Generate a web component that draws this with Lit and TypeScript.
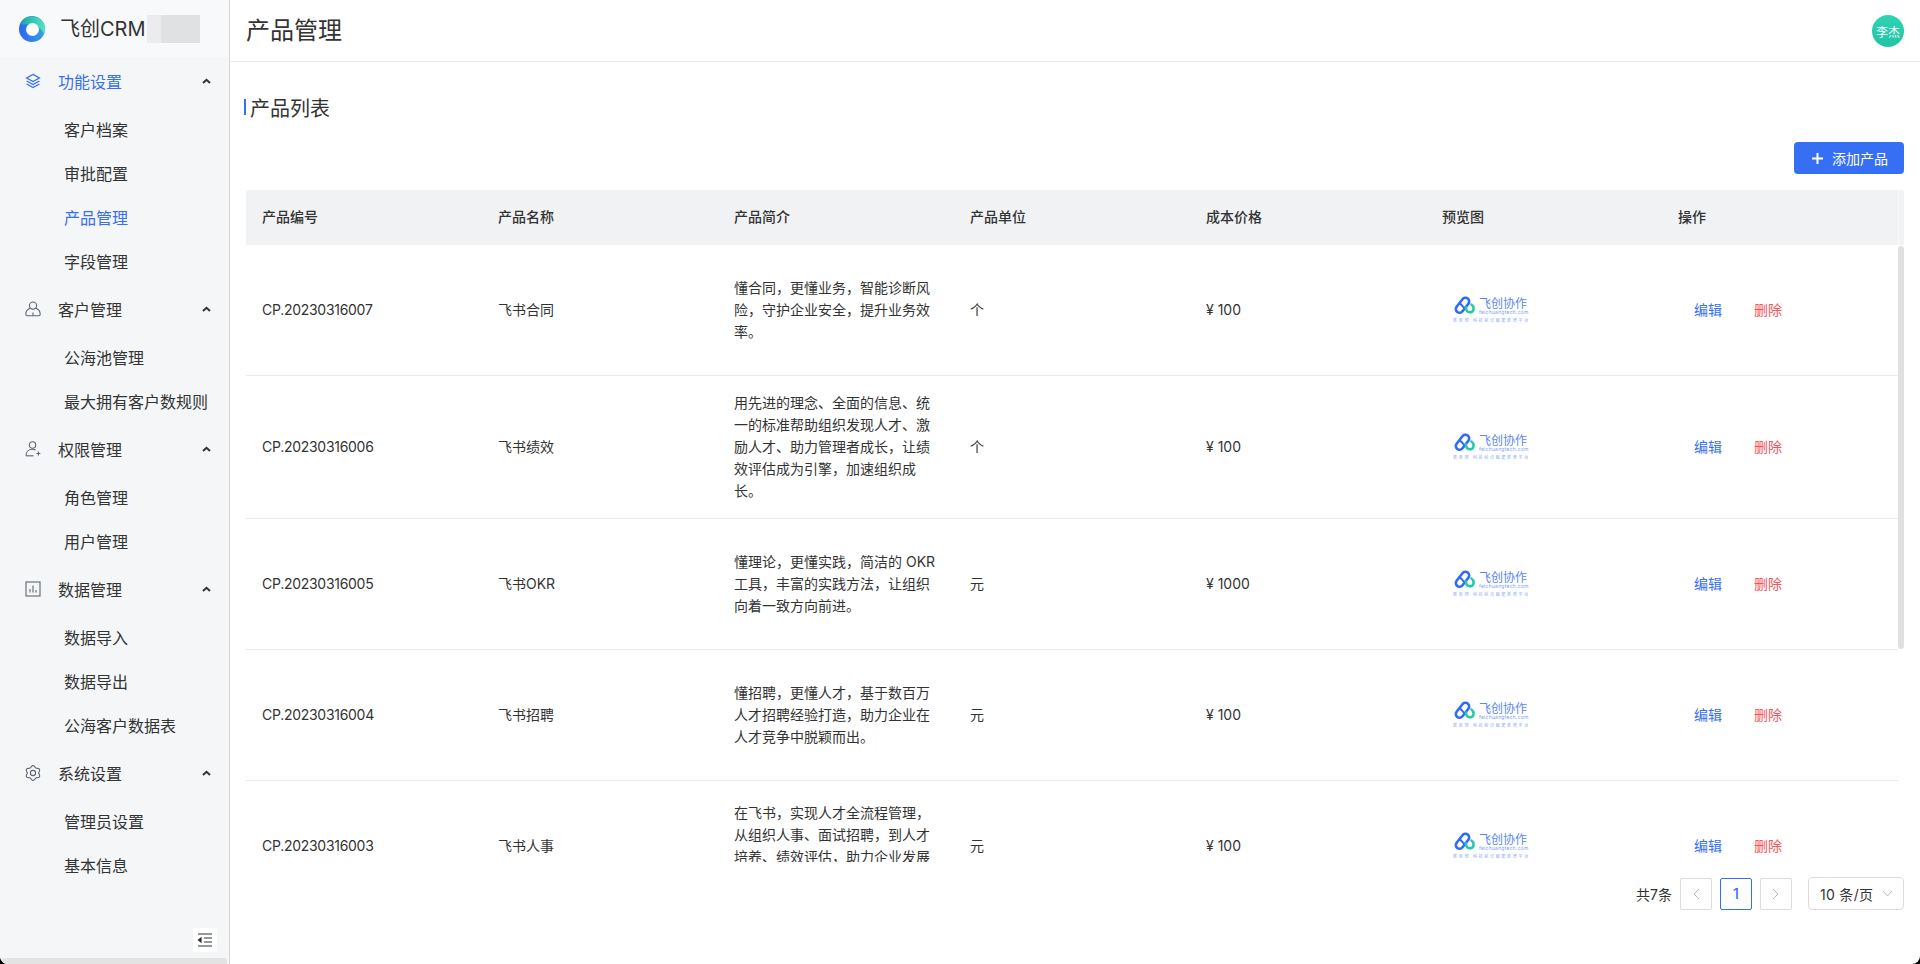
import { LitElement, html, css, svg } from "lit";
import { customElement } from "lit/decorators.js";

function gearPath() {
  const pts: string[] = [];
  const n = 72;
  for (let k = 0; k < n; k++) {
    const a = (k / n) * Math.PI * 2 + Math.PI / 6;
    const r = 6.6 + 0.9 * Math.cos(6 * a - Math.PI);
    pts.push(`${(8 + r * Math.cos(a)).toFixed(2)} ${(8 + r * Math.sin(a)).toFixed(2)}`);
  }
  return "M" + pts.join("L") + "Z";
}

const icons: Record<string, any> = {
  layers: svg`<path d="M8 1.400 14.400 5 8 8.600 1.600 5Z"/><path d="M1.600 8 8 11.600 14.400 8"/><path d="M1.600 11 8 14.600 14.400 11"/>`,
  user: svg`<circle cx="8" cy="4.600" r="3.600"/><path d="M5.200 7.300C2.500 8.300.8 10.600.8 13.300c0 .9.500 1.400 1.400 1.400h11.600c.9 0 1.400-.5 1.400-1.400 0-2.700-1.700-5-4.400-6"/><path d="M8 11.500v3"/>`,
  userAdd: svg`<circle cx="7.500" cy="4" r="3.200"/><path d="M1 14.800c0-3.800 2.600-6.500 6.500-6.500 1.100 0 2.100.2 3 .7"/><path d="M1 14.800h7.500"/><path d="M11.400 12.500h4M13.400 10.500v4"/>`,
  chart: svg`<rect x="1" y="1" width="14" height="14"/><path d="M5 11.500V8M8 11.500V4.500M11 11.500V9"/>`,
  gear: svg`<path d=${gearPath()}/><circle cx="8" cy="8" r="2.600"/>`,
};

const menu = [
  { t: "功能设置", i: "layers", active: true, c: ["客户档案", "审批配置", "产品管理", "字段管理"] },
  { t: "客户管理", i: "user", c: ["公海池管理", "最大拥有客户数规则"] },
  { t: "权限管理", i: "userAdd", c: ["角色管理", "用户管理"] },
  { t: "数据管理", i: "chart", c: ["数据导入", "数据导出", "公海客户数据表"] },
  { t: "系统设置", i: "gear", c: ["管理员设置", "基本信息"] },
];

const C = "\uFF0C";
const rows = [
  ["CP.20230316007", "飞书合同", `懂合同${C}更懂业务${C}智能诊断风险${C}守护企业安全${C}提升业务效率。`, "个", "¥ 100"],
  ["CP.20230316006", "飞书绩效", `用先进的理念、全面的信息、统一的标准帮助组织发现人才、激励人才、助力管理者成长${C}让绩效评估成为引擎${C}加速组织成长。`, "个", "¥ 100"],
  ["CP.20230316005", "飞书OKR", `懂理论${C}更懂实践${C}简洁的 OKR 工具${C}丰富的实践方法${C}让组织向着一致方向前进。`, "元", "¥ 1000"],
  ["CP.20230316004", "飞书招聘", `懂招聘${C}更懂人才${C}基于数百万人才招聘经验打造${C}助力企业在人才竞争中脱颖而出。`, "元", "¥ 100"],
  ["CP.20230316003", "飞书人事", `在飞书${C}实现人才全流程管理${C}从组织人事、面试招聘${C}到人才培养、绩效评估${C}助力企业发展与组织成长。`, "元", "¥ 100"],
];

const heads = ["产品编号", "产品名称", "产品简介", "产品单位", "成本价格", "预览图", "操作"];

@customElement("app-root")
export class AppRoot extends LitElement {
  static styles = css`
    :host { display: block; background: #000; font-family: Inter, "Noto Sans CJK SC", sans-serif; color: #333; }
    * { box-sizing: border-box; }
    .window { height: 964px; display: flex; background: #fff; border-radius: 0 0 8px 8px; overflow: hidden; }
    .side { width: 230px; flex: none; background: #f5f6f8; border-right: 1px solid #d6d6d6; display: flex; flex-direction: column; position: relative; }
    .brand { height: 57px; flex: none; background: #f8f9fa; display: flex; align-items: center; padding-left: 19px; font-size: 20px; color: #333; }
    .brand svg { width: 26px; height: 26px; margin-right: 15px; }
    .brand span { padding-bottom: 2px; }
    .mask { width: 53px; height: 28px; margin-left: 1px; background: linear-gradient(90deg, #ececee 0 14px, #e0e1e3 14px); }
    .group { margin-bottom: 2px; }
    .title { height: 48px; display: flex; align-items: center; font-size: 16px; color: #333; padding-left: 25px; }
    .title.on { color: #366ef4; }
    .ico { width: 16px; height: 16px; margin-right: 17px; fill: none; stroke: #5d6470; stroke-width: 1.1; }
    .title.on .ico { stroke: #366ef4; stroke-width: 1.3; }
    .arrow { width: 9px; height: 6px; margin-left: auto; margin-right: 18px; fill: none; stroke: #333; stroke-width: 2; }
    .subs { padding-top: 2px; }
    .sub { height: 44px; display: flex; align-items: center; padding-left: 64px; font-size: 16px; color: #333; white-space: nowrap; }
    .sub.on { color: #366ef4; }
    .collapse { position: absolute; left: 193px; top: 928px; width: 24px; height: 24px; background: #fff; border-radius: 2px; display: flex; align-items: center; justify-content: center; }
    .collapse svg { width: 16px; height: 14px; fill: none; stroke: #333; stroke-width: 1.2; }
    .hbar { position: absolute; left: 2px; bottom: 0; width: 225px; height: 6px; border-radius: 3px 3px 0 0; background: #e3e3e3; }
    .main { flex: 1; min-width: 0; display: flex; flex-direction: column; }
    .top { height: 62px; flex: none; border-bottom: 1px solid #e7e7e7; display: flex; align-items: center; justify-content: space-between; padding: 0 16px 4px; font-size: 24px; color: #333; }
    .avatar { width: 32px; height: 32px; border-radius: 50%; background: linear-gradient(#2dd4b4, #22c3a6); color: #fff; font-size: 12px; display: flex; align-items: center; justify-content: center; margin-bottom: -5px; }
    .content { flex: 1; padding: 0 16px; min-height: 0; display: flex; flex-direction: column; }
    .section { height: 46px; margin-top: 22px; display: flex; align-items: center; font-size: 20px; color: #333; margin-left: -2px; }
    .section i { width: 2px; height: 16px; background: #366ef4; margin-right: 4px; }
    .bar { display: flex; justify-content: flex-end; margin-top: 12px; height: 32px; margin-bottom: 16px; }
    .btn { width: 110px; height: 32px; background: #366ef4; border-radius: 4px; color: #fff; font-size: 14px; display: flex; align-items: center; padding-left: 18px; gap: 9px; }
    .btn svg { width: 11px; height: 11px; stroke: #fff; stroke-width: 2; fill: none; }
    .thead { height: 55px; flex: none; display: grid; grid-template-columns: repeat(7, 236px) 6px; background: #f1f2f4; border-radius: 3px 3px 0 0; align-items: center; font-size: 14px; font-weight: 500; color: #333; }
    .thead span { padding: 0 0 4px 16px; }
    .gutter { height: 100%; border-left: 1px solid #f8f8f9; }
    .tbody { height: 617px; flex: none; overflow: hidden; position: relative; }
    .thumbbar { position: absolute; right: 0; top: 1px; width: 6px; height: 403px; border-radius: 3px; background: #e0e0e0; }
    .row { display: grid; grid-template-columns: repeat(7, 236px); width: 1652px; border-bottom: 1px solid #ebebeb; align-items: center; font-size: 14px; line-height: 22px; color: #333; }
    .cell { padding: 16px; }
    .code { letter-spacing: -.28px; }
    .cell.thumb { height: 130px; padding: 0 0 0 27px; display: flex; align-items: center; }
    .ops { display: flex; gap: 32px; padding-left: 32px; }
    .edit { color: #366ef4; } .del { color: #f6535a; }
    .logo { width: 78px; height: 28px; position: relative; color: #5a86f6; }
    .logo svg { position: absolute; left: 0; top: 0; width: 22px; height: 20px; fill: none; stroke-width: 2.6; }
    .logo b { position: absolute; left: 26px; top: 1px; font-size: 12px; line-height: 14px; font-weight: 400; white-space: nowrap; }
    .logo em { position: absolute; left: 26px; top: 13px; font-size: 5px; line-height: 6px; letter-spacing: .25px; font-style: normal; white-space: nowrap; color: #7d9ff7; }
    .logo u { position: absolute; left: 0; top: 22px; font-size: 4px; line-height: 5px; text-decoration: none; white-space: nowrap; letter-spacing: 1.7px; color: #8aa8f8; }
    .pager { display: flex; justify-content: flex-end; align-items: center; gap: 8px; margin-top: 15px; font-size: 14px; color: #333; }
    .pg { width: 32px; height: 32px; border: 1px solid #dcdcdc; border-radius: 2px; display: flex; align-items: center; justify-content: center; color: #366ef4; }
    .pg svg { width: 8px; height: 12px; fill: none; stroke: #bbb; stroke-width: 1; }
    .pg.cur { border-color: #366ef4; font-weight: 500; }
    .sel { width: 96px; height: 33px; margin-left: 8px; border: 1px solid #dcdcdc; border-radius: 4px; display: flex; align-items: center; justify-content: space-between; padding: 0 10px 0 11px; letter-spacing: .3px; }
    .sel svg { width: 11px; height: 7px; fill: none; stroke: #bbb; stroke-width: 1; }
  `;

  private logo() {
    return html`<div class="logo">
      <svg viewBox="0 0 22 20">
        <rect x="1" y="5.500" width="17" height="7.500" rx="3.750" transform="rotate(-52 9.500 9.250)" stroke="#2f6bf5" />
        <path d="M6 7c2 1 4 3 6 6" stroke="#2f6bf5" stroke-width="2" />
        <path d="M13 11.500c0 6 7.600 6.500 7.600 1 0-2-1.200-3.400-2.200-4" stroke="#27c9ab" stroke-linecap="round" />
      </svg>
      <b>飞创协作</b><em>feichuangtech.com</em><u>新思想 科技前沿赋能新增平台</u>
    </div>`;
  }

  render() {
    return html`<div class="window">
      <aside class="side">
        <div class="brand">
          <svg viewBox="0 0 26 26">
            <defs>
              <linearGradient id="lb" x1="0" y1="0" x2="1" y2="0"><stop offset="0" stop-color="#2c66f2"/><stop offset="1" stop-color="#35a0ea"/></linearGradient>
              <linearGradient id="lt" x1="0" y1="0" x2="1" y2="0"><stop offset="0" stop-color="#16a89a"/><stop offset="1" stop-color="#4fe6c4"/></linearGradient>
            </defs>
            <circle cx="13" cy="13" r="13" fill="url(#lb)"/>
            <path d="M1.200 8A13 13 0 0 1 26 13c0 2-.4 3.300-1.200 4.800C22 12 17 8 12 8c-4 0-7.500 1-10.800 0Z" fill="url(#lt)"/>
            <circle cx="13.500" cy="13.500" r="6.500" fill="#fff"/>
          </svg>
          <span>飞创CRM</span><div class="mask"></div>
        </div>
        ${menu.map(
          (g) => html`<div class="group">
            <div class="title ${g.active ? "on" : ""}">
              <svg class="ico" viewBox="0 0 16 16">${icons[g.i]}</svg>
              ${g.t}
              <svg class="arrow" viewBox="0 0 9 6"><path d="M1 5l3.500-3.200L8 5"/></svg>
            </div>
            <div class="subs">
              ${g.c.map((s) => html`<div class="sub ${s === "产品管理" ? "on" : ""}">${s}</div>`)}
            </div>
          </div>`
        )}
        <div class="collapse"><svg viewBox="0 0 16 14"><path d="M1 1h14M7 5h8M7 9h8M1 13h14"/><path d="M4 5 1.500 7 4 9Z" fill="#333"/></svg></div>
        <div class="hbar"></div>
      </aside>
      <main class="main">
        <header class="top"><span>产品管理</span><div class="avatar">李杰</div></header>
        <div class="content">
          <div class="section"><i></i>产品列表</div>
          <div class="bar"><div class="btn"><svg viewBox="0 0 11 11"><path d="M5.500 0v11M0 5.500h11"/></svg>添加产品</div></div>
          <div class="thead">${heads.map((h) => html`<span>${h}</span>`)}<div class="gutter"></div></div>
          <div class="tbody">
            ${rows.map(
              (r) => html`<div class="row">
                <div class="cell code">${r[0]}</div>
                <div class="cell">${r[1]}</div>
                <div class="cell">${r[2]}</div>
                <div class="cell">${r[3]}</div>
                <div class="cell">${r[4]}</div>
                <div class="cell thumb">${this.logo()}</div>
                <div class="ops"><span class="edit">编辑</span><span class="del">删除</span></div>
              </div>`
            )}
            <div class="thumbbar"></div>
          </div>
          <div class="pager">
            <span>共7条</span>
            <div class="pg"><svg viewBox="0 0 8 12"><path d="M7 1 2 6l5 5"/></svg></div>
            <div class="pg cur">1</div>
            <div class="pg"><svg viewBox="0 0 8 12"><path d="M1 1l5 5-5 5"/></svg></div>
            <div class="sel"><span>10 条/页</span><svg viewBox="0 0 11 7"><path d="M1 1l4.500 5L10 1"/></svg></div>
          </div>
        </div>
      </main>
    </div>`;
  }
}
